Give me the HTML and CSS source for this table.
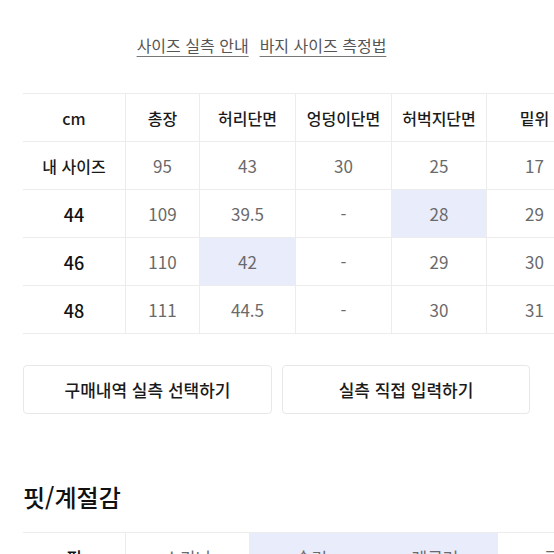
FILE: index.html
```html
<!DOCTYPE html>
<html lang="ko">
<head>
<meta charset="utf-8">
<link rel="stylesheet" href="styles.css">
</head>
<body>
<div class="page">
  <div class="links">
    <a class="link">사이즈 실측 안내</a>
    <a class="link">바지 사이즈 측정법</a>
  </div>

  <div class="size-table">
    <div class="cell head label">cm</div>
    <div class="cell head">총장</div>
    <div class="cell head">허리단면</div>
    <div class="cell head">엉덩이단면</div>
    <div class="cell head">허벅지단면</div>
    <div class="cell head">밑위</div>

    <div class="cell label mine">내 사이즈</div>
    <div class="cell">95</div>
    <div class="cell">43</div>
    <div class="cell">30</div>
    <div class="cell">25</div>
    <div class="cell">17</div>

    <div class="cell label num">44</div>
    <div class="cell">109</div>
    <div class="cell">39.5</div>
    <div class="cell">-</div>
    <div class="cell hl">28</div>
    <div class="cell">29</div>

    <div class="cell label num">46</div>
    <div class="cell">110</div>
    <div class="cell hl">42</div>
    <div class="cell">-</div>
    <div class="cell">29</div>
    <div class="cell">30</div>

    <div class="cell label num">48</div>
    <div class="cell">111</div>
    <div class="cell">44.5</div>
    <div class="cell">-</div>
    <div class="cell">30</div>
    <div class="cell">31</div>
  </div>

  <div class="buttons">
    <button class="btn">구매내역 실측 선택하기</button>
    <button class="btn">실측 직접 입력하기</button>
  </div>

  <h2 class="section-title">핏/계절감</h2>

  <div class="fit-table">
    <div class="fcell label">핏</div>
    <div class="fcell">스키니</div>
    <div class="fcell hl">슬림</div>
    <div class="fcell hl">레귤러</div>
    <div class="fcell">루즈</div>
  </div>
</div>
</body>
</html>
```

FILE: styles.css
```css
html, body {
  margin: 0;
  padding: 0;
  background: #ffffff;
}

body {
  font-family: "Noto Sans CJK KR", "Noto Sans", sans-serif;
  color: #111;
  overflow: hidden;
}

.page {
  width: 554px;
  height: 554px;
  overflow: hidden;
  padding-left: 23px;
  box-sizing: border-box;
}

.links {
  display: flex;
  justify-content: center;
  gap: 11px;
  padding-top: 32px;
  padding-right: 54px;
  height: 93px;
  box-sizing: border-box;
}

.link {
  font-size: 16px;
  line-height: 26px;
  color: #555;
  text-decoration: underline;
  text-decoration-color: #777;
  text-underline-offset: 4px;
  text-decoration-thickness: 1px;
}

.size-table {
  display: grid;
  grid-template-columns: 102px 74px 96px 96px 95px 96px;
  grid-auto-rows: 48px;
  width: 559px;
  border-top: 1px solid #ececec;
}

.cell {
  display: flex;
  align-items: center;
  justify-content: center;
  border-bottom: 1px solid #ececec;
  border-left: 1px solid #ececec;
  font-size: 17px;
  color: #6a6a6a;
  box-sizing: border-box;
}

.cell.label {
  border-left: none;
}

.cell.head {
  color: #1a1a1a;
  font-size: 16px;
  font-weight: 500;
}

.cell.mine {
  color: #1a1a1a;
  font-size: 16px;
  font-weight: 500;
}

.cell.num {
  color: #111;
  font-size: 18px;
  font-weight: 500;
}

.cell.hl {
  background: #e9ecfb;
}

.buttons {
  display: flex;
  gap: 10px;
  margin-top: 31px;
}

.btn {
  font-family: "Noto Sans CJK KR", "Noto Sans", sans-serif;
  height: 49px;
  background: #fff;
  border: 1px solid #e8e8e8;
  border-radius: 4px;
  font-size: 17px;
  font-weight: 500;
  color: #1a1a1a;
  padding: 0;
}

.btn:first-child {
  width: 249px;
}

.btn:last-child {
  width: 248px;
}

.section-title {
  margin: 67px 0 0;
  font-size: 24px;
  line-height: 32px;
  font-weight: 500;
  color: #111;
}

.fit-table {
  display: grid;
  grid-template-columns: 102px 124px 124px 124px 124px;
  grid-auto-rows: 48px;
  margin-top: 19px;
  border-top: 1px solid #ececec;
}

.fcell {
  display: flex;
  align-items: center;
  justify-content: center;
  border-left: 1px solid #ececec;
  font-size: 17px;
  color: #6a6a6a;
}

.fcell.label {
  border-left: none;
  color: #111;
  font-weight: 500;
}

.fcell.hl {
  background: #e9ecfb;
}

.fcell.hl + .fcell.hl {
  border-left: none;
}
```
